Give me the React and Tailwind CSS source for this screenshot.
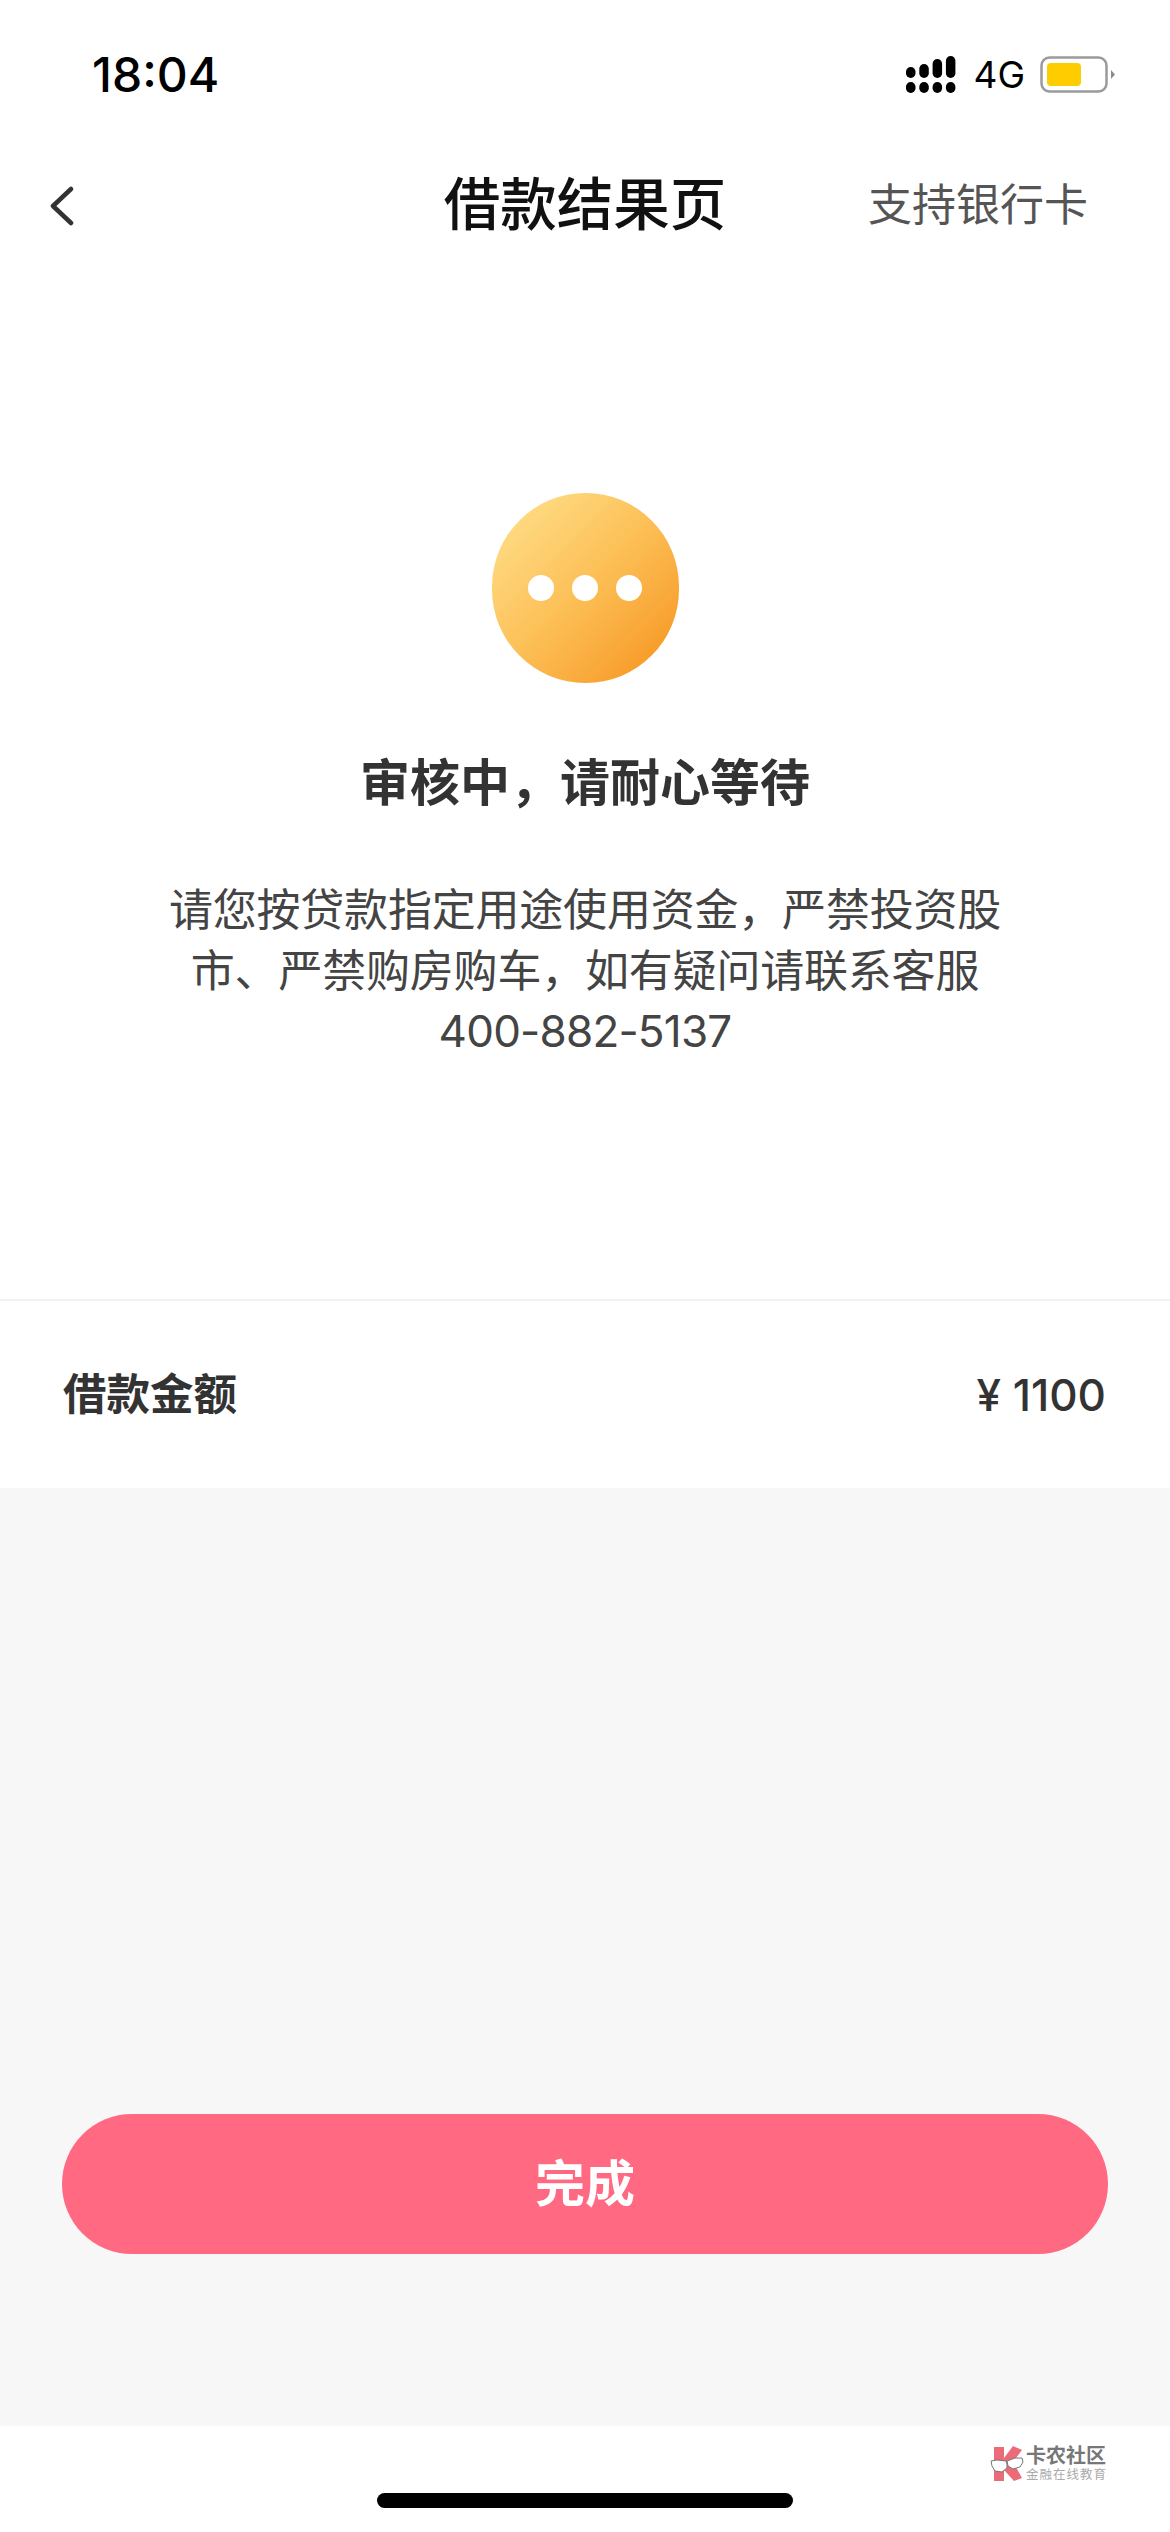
import React from "react";

const FONT = "font-['Inter','Noto_Sans_CJK_SC',sans-serif]";
const COMMA = "\uFF0C";

// ── Status bar ──

function SignalIcon() {
  const tops = [11, 8, 3, 0];
  return (
    <svg width="52" height="38" viewBox="0 0 52 38" fill="#000">
      {tops.map((top, i) => (
        <g key={i}>
          <rect x={1 + i * 13.3} y={top} width="9.5" height={22 - top} rx="4.7" />
          <rect x={1 + i * 13.3} y="26" width="9.5" height="11" rx="4.7" />
        </g>
      ))}
    </svg>
  );
}

function BatteryIcon() {
  return (
    <svg width="76" height="38" viewBox="0 0 76 38">
      <rect x="1.5" y="1.5" width="65" height="34" rx="8" fill="#fff" stroke="#9a9a9a" strokeWidth="2.5" />
      <rect x="7" y="7" width="34" height="23" rx="4" fill="#ffcc00" />
      <path d="M71 14l4 4.5-4 4.5z" fill="#8c8c8c" />
    </svg>
  );
}

function StatusBar() {
  return (
    <div className="flex h-[130px] shrink-0 items-start justify-between pl-[92px] pr-[54px] pt-[49px]">
      <span className="text-[48px] font-medium leading-[52px] text-black">18:04</span>
      <div className="mt-[7px] flex items-center">
        <SignalIcon />
        <span className="ml-[16px] text-[37px] leading-[38px] text-black">4G</span>
        <div className="ml-[15px]">
          <BatteryIcon />
        </div>
      </div>
    </div>
  );
}

// ── Nav ──

function NavBar() {
  return (
    <div className="relative flex h-[150px] shrink-0 items-center justify-center">
      <svg className="absolute left-[48px] top-[56px]" width="28" height="40" viewBox="0 0 28 40" fill="none">
        <path d="M23 3L5 20l18 17" stroke="#333" strokeWidth="4.5" strokeLinecap="round" strokeLinejoin="round" />
      </svg>
      <h1 className="text-[56.5px] font-medium leading-[70px] text-[#111]">借款结果页</h1>
      <span className="absolute right-[82px] top-[50px] text-[44px] leading-[50px] text-[#555]">支持银行卡</span>
    </div>
  );
}

// ── Review status ──

function PendingBadge() {
  return (
    <div className="flex h-[190px] w-[187px] items-center justify-center gap-[18px] rounded-full bg-gradient-to-br from-[#ffe38f] via-[#fcbf55] to-[#f5900a]">
      <div className="h-[26px] w-[26px] rounded-full bg-white" />
      <div className="h-[26px] w-[26px] rounded-full bg-white" />
      <div className="h-[26px] w-[26px] rounded-full bg-white" />
    </div>
  );
}

function ReviewSection() {
  return (
    <div className="flex h-[1021px] shrink-0 flex-col items-center border-b-2 border-[#f2f2f2] pt-[213px]">
      <PendingBadge />
      <h2 className="mt-[69px] text-[50px] font-semibold leading-[62px] text-[#333]">审核中{COMMA}请耐心等待</h2>
      <p className="mt-[66px] w-[900px] text-center text-[44px] leading-[60.5px] tracking-[-0.2px] text-[#444]">
        请您按贷款指定用途使用资金{COMMA}严禁投资股
        <br />
        市、严禁购房购车{COMMA}如有疑问请联系客服
        <br />
        <span className="tracking-[-0.8px]">400-882-5137</span>
      </p>
    </div>
  );
}

function AmountRow() {
  return (
    <div className="flex h-[187px] shrink-0 items-center justify-between pl-[63px] pr-[64px]">
      <span className="text-[43.5px] font-semibold text-[#333]">借款金额</span>
      <span className="text-[44px] font-medium text-[#333]">¥ 1100</span>
    </div>
  );
}

// ── Watermark ──

function Watermark() {
  return (
    <div className="absolute right-[63px] top-[19px] flex items-center">
      <svg width="35" height="36" viewBox="0 0 35 36">
        <path d="M5 1h10v11L24 0l9 4-9 12 9 16-8 3-10-11v11H5z" fill="#ec6b78" />
        <path d="M2 15l6-1 9 1 1 3 0 4-5 4-7-1-3-5z" fill="#fff" stroke="#777" strokeWidth="1" />
        <path d="M18 15l8-3 7 0 1 4-3 5-7 2-5-3z" fill="#fff" stroke="#777" strokeWidth="1" />
      </svg>
      <div className="ml-[2px] flex flex-col">
        <span className="text-[20px] font-semibold leading-[22px] text-[#777]">卡农社区</span>
        <span className="text-[12.5px] leading-[16px] tracking-[1px] text-[#aaa]">金融在线教育</span>
      </div>
    </div>
  );
}

export default function App() {
  return (
    <div className={`flex h-[2532px] w-[1170px] flex-col overflow-hidden bg-white ${FONT}`}>
      <StatusBar />
      <NavBar />
      <ReviewSection />
      <AmountRow />
      <div className="flex flex-1 flex-col bg-[#f7f7f7] px-[62px] pt-[626px]">
        <button className="h-[140px] w-full rounded-full bg-[#ff6981] text-[50px] font-semibold text-white">完成</button>
      </div>
      <div className="relative h-[106px] shrink-0">
        <Watermark />
        <div className="absolute bottom-[24px] left-[377px] h-[15px] w-[416px] rounded-full bg-black" />
      </div>
    </div>
  );
}
